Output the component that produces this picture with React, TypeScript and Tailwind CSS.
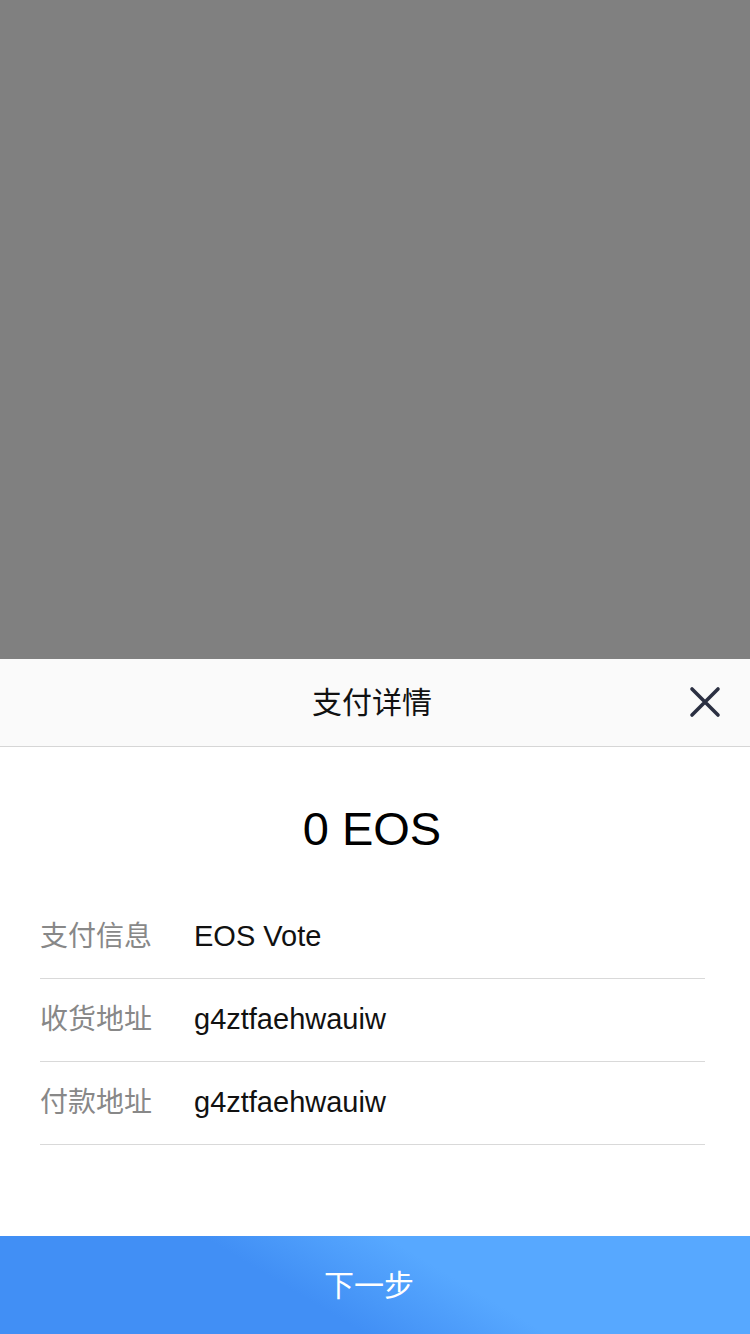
import React from 'react';

const ROWS = [
  { label: '支付信息', value: 'EOS Vote' },
  { label: '收货地址', value: 'g4ztfaehwauiw' },
  { label: '付款地址', value: 'g4ztfaehwauiw' },
];

const FONT = { fontFamily: '"Liberation Sans", "Noto Sans CJK SC", sans-serif' };

export default function App() {
  return (
    <div className="flex h-[1334px] w-[750px] flex-col bg-white" style={FONT}>
      {/* dimmed backdrop */}
      <div className="flex-1 bg-[#808080]" />

      {/* sheet */}
      <div className="flex flex-col bg-white">
        <div className="relative flex h-[88px] items-center justify-center border-b border-[#d6d6d6] bg-[#fafafa] pr-[6px]">
          <span className="text-[30px] text-[#111]">支付详情</span>
          <button className="absolute right-[28px] top-[26px] flex h-[34px] w-[34px] items-center justify-center">
            <svg width="32" height="32" viewBox="0 0 32 32" fill="none">
              <path d="M3 3 L29 29 M29 3 L3 29" stroke="#2b3042" strokeWidth="3.6" strokeLinecap="round" />
            </svg>
          </button>
        </div>

        <div className="flex h-[149px] items-center justify-center pt-[14px] pr-[6px]">
          <span className="text-[47px] leading-none text-black">0 EOS</span>
        </div>

        <div className="pl-[40px] pr-[45px]">
          {ROWS.map((row) => (
            <div key={row.label} className="flex h-[83px] items-center border-b border-[#d9d9d9]">
              <span className="w-[154px] text-[28px] text-[#888]">{row.label}</span>
              <span className="text-[29px] text-[#111]">{row.value}</span>
            </div>
          ))}
        </div>

        <div className="h-[91px]" />

        <button className="flex h-[98px] w-full items-center justify-center bg-[linear-gradient(31deg,#418ff5_40%,#57a8ff_60%)] pr-[12px] text-[30px] text-white">
          下一步
        </button>
      </div>
    </div>
  );
}
